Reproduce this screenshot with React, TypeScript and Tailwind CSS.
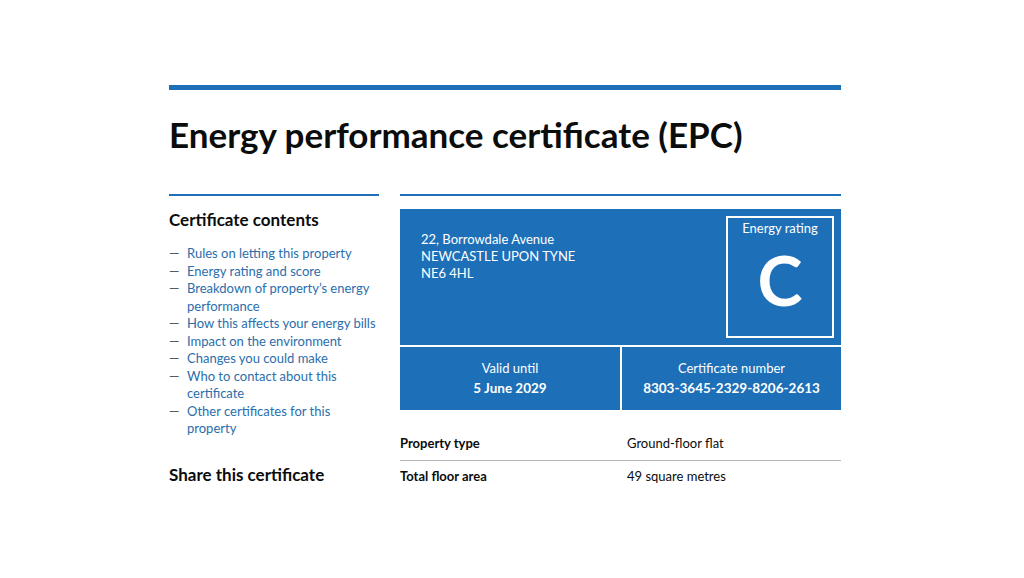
import React from "react";

const contents = [
  "Rules on letting this property",
  "Energy rating and score",
  "Breakdown of property’s energy performance",
  "How this affects your energy bills",
  "Impact on the environment",
  "Changes you could make",
  "Who to contact about this certificate",
  "Other certificates for this property",
];

export default function App() {
  return (
    <div
      className="min-h-[578px] bg-white text-[#0b0c0c]"
      style={{ fontFamily: 'Lato, "Noto Sans", Arial, sans-serif' }}
    >
      <div className="ml-[169px] w-[672px] pt-[85px]">
        <div className="h-[5px] bg-[#1d70b8]" />
        <h1 className="mt-[24px] text-[35px] font-bold leading-[40px]">
          Energy performance certificate (EPC)
        </h1>

        <div className="mt-[40px] flex gap-[21px]">
          <div className="w-[210px] shrink-0 border-t-2 border-[#1d70b8] pt-[13px]">
            <h2 className="text-[17px] font-bold leading-[22px]">Certificate contents</h2>
            <ul className="mt-[14px] text-[13px] leading-[17.5px]">
              {contents.map((c) => (
                <li key={c} className="flex">
                  <span className="w-[18px] shrink-0 text-[#505a5f]">—</span>
                  <a className="text-[#2a6eac]">{c}</a>
                </li>
              ))}
            </ul>
            <h2 className="mt-[26px] text-[17px] font-bold leading-[22px]">Share this certificate</h2>
          </div>

          <div className="flex-1 border-t-2 border-[#1d70b8] pt-[13px]">
            <div className="bg-[#1d70b8] text-white">
              <div className="flex h-[136px] justify-between pl-[21px] pr-[7px] pt-[7px]">
                <div className="pt-[15px] text-[13px] leading-[17px]">
                  <div>22, Borrowdale Avenue</div>
                  <div>NEWCASTLE UPON TYNE</div>
                  <div>NE6 4HL</div>
                </div>
                <div className="flex h-[122px] w-[108px] flex-col items-center border-2 border-white pt-[1px]">
                  <div className="text-[13px] leading-[18px]">Energy rating</div>
                  <div className="mt-[11px] text-[68px] font-bold leading-[64px]">C</div>
                </div>
              </div>
              <div className="flex border-t-2 border-white text-[13px]">
                <div className="flex h-[63px] w-[222px] flex-col items-center justify-center border-r-2 border-white">
                  <div className="leading-[19px]">Valid until</div>
                  <div className="text-[13.5px] font-bold leading-[21px]">5 June 2029</div>
                </div>
                <div className="flex h-[63px] flex-1 flex-col items-center justify-center">
                  <div className="leading-[19px]">Certificate number</div>
                  <div className="text-[13.5px] font-bold leading-[21px]">8303-3645-2329-8206-2613</div>
                </div>
              </div>
            </div>

            <div className="mt-[16px] text-[13px]">
              <div className="flex border-b border-[#b1b4b6] py-[8px] leading-[18px]">
                <div className="w-[227px] font-bold">Property type</div>
                <div>Ground-floor flat</div>
              </div>
              <div className="flex py-[6px] leading-[18px]">
                <div className="w-[227px] font-bold">Total floor area</div>
                <div>49 square metres</div>
              </div>
            </div>
          </div>
        </div>
      </div>
    </div>
  );
}
